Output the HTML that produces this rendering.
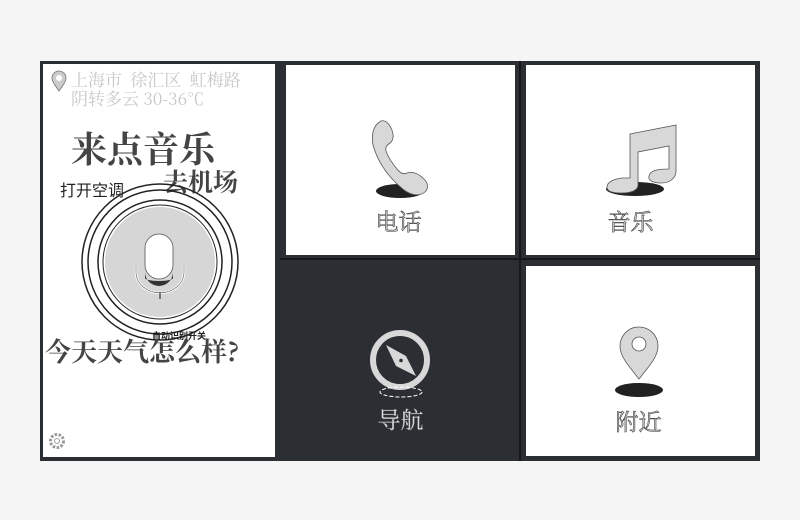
<!DOCTYPE html>
<html><head><meta charset="utf-8"><style>
body{margin:0;width:800px;height:520px;background:#f5f5f5;position:relative;overflow:hidden;font-family:"Liberation Serif","Noto Serif CJK SC",serif}
.a{position:absolute}
.frame{left:40px;top:61px;width:720px;height:400px;background:#2b2e33}
.w{background:#fff}
.lbl{position:absolute;width:100%;text-align:center;font-size:23px;color:#d4d4d4;-webkit-text-stroke:0.6px #444;font-family:"Noto Serif CJK SC",serif;line-height:1}
.t{position:absolute;white-space:nowrap;line-height:1;font-family:"Noto Serif CJK SC",serif}
</style></head><body>
<div class="a frame"></div>
<div class="a w" style="left:43px;top:64px;width:232px;height:393px"></div>
<div class="a" style="left:519px;top:61px;width:2px;height:400px;background:#15171a"></div>
<div class="a" style="left:280px;top:258px;width:480px;height:2px;background:#15171a"></div>
<div class="a w" style="left:286px;top:65px;width:229px;height:190px">
 <svg class="a" style="left:0;top:0" width="229" height="190">
  <ellipse cx="114" cy="126" rx="24" ry="7" fill="#222"/>
  <path d="M95 56 C88 60 85 68 87 80 C92 98 103 113 118 125 C126 131 134 131 139 127 C143 123 142 118 138 114 C133 109 127 106 121 108 C117 110 114 108 111 104 C106 98 102 92 100 86 C99 82 101 80 104 78 C108 75 108 69 105 63 C102 57 99 55 95 56Z" fill="#d8d8d8" stroke="#555" stroke-width="0.8"/>
 </svg>
 <div class="lbl" style="top:144px;left:-2px">电话</div>
</div>
<div class="a w" style="left:526px;top:65px;width:229px;height:190px">
 <svg class="a" style="left:0;top:0" width="229" height="190">
  <ellipse cx="109" cy="124" rx="29" ry="7" fill="#222"/>
  <path d="M104 69 L150 60 L150 106 C150 113 144 118 135 118 C126 118 122 115 123 111 C124 106 130 104 143 104 L143 81 L112 87 L112 120 C112 125 106 128 95 128 C85 128 81 126 81 122 C81 117 88 114 96 113 L104 113 Z" fill="#d8d8d8" stroke="#555" stroke-width="0.8"/>
 </svg>
 <div class="lbl" style="top:144px;left:-10px">音乐</div>
</div>
<div class="a w" style="left:526px;top:266px;width:229px;height:190px">
 <svg class="a" style="left:0;top:0" width="229" height="190">
  <ellipse cx="113" cy="124" rx="24" ry="7" fill="#222"/>
  <g transform="translate(0,12)">
  <path d="M113 101 C101 86 94 78 94 68 A19 19 0 0 1 132 68 C132 78 125 86 113 101Z" fill="#d8d8d8" stroke="#555" stroke-width="0.8"/>
  <circle cx="113" cy="66" r="7" fill="#fff" stroke="#555" stroke-width="0.8"/>
  </g>
 </svg>
 <div class="lbl" style="top:143px;left:-2px">附近</div>
</div>
<svg class="a" style="left:282px;top:261px" width="237" height="200">
 <circle cx="118" cy="99" r="27" fill="none" stroke="#d8d8d8" stroke-width="6"/>
 <path d="M104 84 L124 95 L134 115 L114 105Z" fill="#d8d8d8"/>
 <circle cx="119" cy="99.5" r="1.8" fill="#2b2e33"/>
 <ellipse cx="119" cy="131" rx="21" ry="5" fill="none" stroke="#fff" stroke-width="1" stroke-dasharray="4 2"/>
</svg>
<div class="lbl" style="left:282px;width:237px;top:407px;color:#ddd;-webkit-text-stroke:0.3px #999">导航</div>

<svg class="a" style="left:50px;top:70px" width="20" height="24"><path d="M9 21 C4 14 2 11 2 8 A7 7 0 0 1 16 8 C16 11 14 14 9 21Z" fill="#ccc" stroke="#777" stroke-width="0.8"/><circle cx="9" cy="8" r="3" fill="#fff"/></svg>
<div class="t" style="left:71px;top:70px;font-size:17px;color:#c8c8c8;word-spacing:4px">上海市&nbsp;徐汇区&nbsp;虹梅路</div>
<div class="t" style="left:71px;top:89px;font-size:17px;color:#c8c8c8">阴转多云 30-36℃</div>
<div class="t" style="left:71px;top:130px;font-size:36px;color:#444;font-weight:bold">来点音乐</div>
<div class="t" style="left:60px;top:181px;font-size:16px;color:#222;font-family:'Noto Sans CJK SC',sans-serif">打开空调</div>
<div class="t" style="left:163px;top:169px;font-size:25px;color:#444;font-weight:bold">去机场</div>
<svg class="a" style="left:80px;top:182px" width="160" height="160">
 <circle cx="80" cy="80" r="78" fill="none" stroke="#222" stroke-width="1.5"/>
 <circle cx="80" cy="80" r="72" fill="none" stroke="#222" stroke-width="1.5"/>
 <circle cx="80" cy="80" r="62" fill="none" stroke="#222" stroke-width="1.5"/>
 <circle cx="80" cy="80" r="57" fill="none" stroke="#222" stroke-width="1"/>
 <circle cx="80" cy="80" r="55" fill="#d6d6d6"/>
 <rect x="65" y="52" width="28" height="45" rx="14" fill="#fff" stroke="#555" stroke-width="0.8"/>
 <path d="M65 90 A14 14 0 0 0 93 90 L93 96 A14 3 0 0 1 65 96Z" fill="#333"/>
 <path d="M56 86 L56 90 A23 20 0 0 0 104 90 L104 86" fill="none" stroke="#fff" stroke-width="2.5"/>
 <path d="M56 86 L56 90 A23 20 0 0 0 104 90 L104 86" fill="none" stroke="#555" stroke-width="0.6"/>
 <line x1="80" y1="110" x2="80" y2="117" stroke="#555" stroke-width="1.5"/>
</svg>
<div class="t" style="left:152px;top:331px;font-size:9px;color:#222;font-weight:bold;font-family:'Noto Sans CJK SC',sans-serif">自动识别开关</div>
<div class="t" style="left:45px;top:338px;font-size:26px;color:#444;font-weight:bold">今天天气怎么样?</div>
<svg class="a" style="left:47px;top:431px" width="20" height="20"><circle cx="10" cy="10" r="6.5" fill="none" stroke="#999" stroke-width="3" stroke-dasharray="2.5 1.5"/><circle cx="10" cy="10" r="2.5" fill="none" stroke="#999"/></svg>
</body></html>
